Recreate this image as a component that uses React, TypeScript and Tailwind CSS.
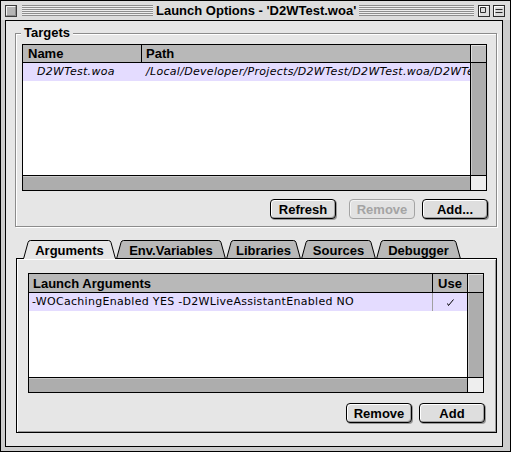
import React from 'react'

const bold = "font-['Liberation_Sans',Arial,sans-serif] font-bold text-[13px] text-black"
const geneva = "font-['DejaVu_Sans',Verdana,sans-serif] text-[11px] tracking-[0.3px] text-black"

function Stripes({ className }: { className: string }) {
  return (
    <div
      className={`h-[11px] bg-[image:repeating-linear-gradient(to_bottom,#8e8e8e_0px,#8e8e8e_1px,#eeeeee_1px,#eeeeee_2px)] ${className}`}
    />
  )
}

function CloseBox() {
  return (
    <svg width="12" height="12" className="shrink-0">
      <rect x="0.5" y="0.5" width="11" height="11" fill="#b4b4b4" stroke="#3c3c3c" />
      <path d="M1.5 10.5V1.5H10.5" stroke="#f4f4f4" fill="none" />
      <path d="M1.5 10.5H10.5V1.5" stroke="#8a8a8a" fill="none" />
    </svg>
  )
}

function ZoomBox() {
  return (
    <svg width="12" height="12" className="shrink-0 ml-[4px]">
      <rect x="0.5" y="0.5" width="11" height="11" fill="#dcdcdc" stroke="#2c2c2c" />
      <path d="M2.5 2.5H7.5V7.5H2.5Z" fill="none" stroke="#2c2c2c" />
      <path d="M1.5 10.5V1.5H10.5" stroke="#fff" fill="none" />
    </svg>
  )
}

function CollapseBox() {
  return (
    <svg width="12" height="12" className="shrink-0 ml-[3px]">
      <rect x="0.5" y="0.5" width="11" height="11" fill="#dcdcdc" stroke="#2c2c2c" />
      <path d="M2.5 4.5H9.5M2.5 7.5H9.5" stroke="#2c2c2c" fill="none" />
      <path d="M1.5 10.5V1.5H10.5" stroke="#fff" fill="none" />
    </svg>
  )
}

function Button({ label, disabled }: { label: string; disabled?: boolean }) {
  return (
    <div
      className={`w-[66px] h-[20px] rounded-[4px] border flex items-center justify-center ${bold} leading-none ${
        disabled
          ? 'border-[#a4a4a4] !text-[#a4a4a4] bg-[#e2e2e2] shadow-[inset_1px_1px_0_#f4f4f4]'
          : 'border-black bg-[#dedede] shadow-[inset_1px_1px_0_#fff,inset_-1px_-1px_0_#a0a0a0,1px_1px_0_#9a9a9a]'
      }`}
    >
      {label}
    </div>
  )
}

function VScroll({ head }: { head: string }) {
  return (
    <div className="w-[16px] border-l border-black flex flex-col shrink-0">
      <div className={`${head} border-b border-black bg-[#bdbdbd] shadow-[inset_1px_1px_0_#e0e0e0]`} />
      <div className="flex-1 bg-[#adadad] shadow-[inset_1px_0_0_#cacaca]" />
    </div>
  )
}

function HScroll() {
  return (
    <div className="h-[15px] border-t border-black flex shrink-0">
      <div className="flex-1 bg-[#adadad] shadow-[inset_0_1px_0_#cacaca]" />
      <div className="w-[16px] border-l border-black bg-[#eeeeee]" />
    </div>
  )
}

function Tab({ label, w, width, active }: { label: string; w: number; width: string; active?: boolean }) {
  const d = `M0.5 19 L5 2.5 Q5.6 0.5 7.5 0.5 L${w - 7.5} 0.5 Q${w - 5.6} 0.5 ${w - 5} 2.5 L${w - 0.5} 19`
  return (
    <div className={`relative h-[19px] shrink-0 ${width}`}>
      <svg width={w} height="19" className="absolute left-0 top-0">
        <path d={d} fill={active ? '#e6e6e6' : '#b9b9b9'} stroke="#000" />
        {active ? (
          <rect x="1" y="18" width={w - 2} height="1" fill="#e6e6e6" />
        ) : (
          <path d={`M0 18.5H${w}`} stroke="#000" />
        )}
      </svg>
      <div className={`relative text-center pt-[3px] leading-[15px] whitespace-nowrap ${bold}`}>{label}</div>
    </div>
  )
}

export default function App() {
  return (
    <div className="w-[511px] h-[452px] border border-black bg-[#cccccc] flex flex-col overflow-hidden">
      <div className="h-[19px] shrink-0 flex items-center pl-[4px] pr-[5px] bg-[#dddddd]">
        <CloseBox />
        <Stripes className="ml-[5px] w-[131px] shrink-0" />
        <div className={`${bold} px-[3px] leading-[15px] whitespace-nowrap`}>Launch Options - 'D2WTest.woa'</div>
        <Stripes className="flex-1" />
        <ZoomBox />
        <CollapseBox />
      </div>

      <div className="flex-1 ml-[4px] mr-[7px] mb-[4px] border border-black bg-[#e6e6e6] flex flex-col">
        <div className="relative mt-[12px] ml-[9px] mr-[5px] h-[194px] shrink-0 border border-[#8c8c8c] shadow-[1px_1px_0_#fff,inset_1px_1px_0_#fff] flex flex-col pl-[6px] pr-[9px] pt-[10px]">
          <span className={`absolute -top-[9px] left-[5px] px-[3px] bg-[#e6e6e6] leading-[15px] ${bold}`}>Targets</span>

          <div className="h-[147px] shrink-0 border border-black bg-white flex flex-col">
            <div className="flex-1 flex min-h-0">
              <div className="flex-1 min-w-0 flex flex-col">
                <div className={`h-[18px] shrink-0 flex border-b border-black bg-[#b8b8b8] leading-none ${bold}`}>
                  <div className="w-[119px] border-r border-black pl-[5px] flex items-center">Name</div>
                  <div className="flex-1 pl-[4px] flex items-center">Path</div>
                </div>
                <div className={`h-[18px] shrink-0 flex bg-[#e4dcff] italic ${geneva}`}>
                  <div className="w-[119px] pl-[14px] flex items-center">D2WTest.woa</div>
                  <div className="flex-1 min-w-0 pl-[4px] flex items-center whitespace-nowrap overflow-hidden">
                    /Local/Developer/Projects/D2WTest/D2WTest.woa/D2WTest
                  </div>
                </div>
              </div>
              <VScroll head="h-[18px]" />
            </div>
            <HScroll />
          </div>

          <div className="mt-[8px] flex justify-end -mr-[1px]">
            <Button label="Refresh" />
            <div className="ml-[13px]">
              <Button label="Remove" disabled />
            </div>
            <div className="ml-[7px]">
              <Button label="Add..." />
            </div>
          </div>
        </div>

        <div className="relative z-10 mt-[13px] ml-[17px] h-[19px] -mb-[1px] flex shrink-0">
          <Tab label="Arguments" w={93} width="w-[93px]" active />
          <Tab label="Env.Variables" w={110} width="w-[110px]" />
          <Tab label="Libraries" w={75} width="w-[75px]" />
          <Tab label="Sources" w={75} width="w-[75px]" />
          <Tab label="Debugger" w={85} width="w-[85px]" />
        </div>

        <div className="ml-[10px] mr-[5px] h-[175px] shrink-0 border border-black bg-[#e6e6e6] shadow-[inset_1px_1px_0_#fff,inset_-1px_-1px_0_#9a9a9a] flex flex-col pl-[11px] pr-[12px] pt-[14px]">
          <div className="h-[120px] shrink-0 border border-black bg-white flex flex-col">
            <div className="flex-1 flex min-h-0">
              <div className="flex-1 min-w-0 flex flex-col">
                <div className={`h-[19px] shrink-0 flex border-b border-black bg-[#b8b8b8] leading-none ${bold}`}>
                  <div className="flex-1 pl-[4px] flex items-center">Launch Arguments</div>
                  <div className="w-[35px] border-l border-black flex items-center justify-center">Use</div>
                </div>
                <div className={`h-[18px] shrink-0 flex bg-[#e4dcff] ${geneva}`}>
                  <div className="flex-1 min-w-0 pl-[3px] flex items-center whitespace-nowrap overflow-hidden">
                    -WOCachingEnabled YES -D2WLiveAssistantEnabled NO
                  </div>
                  <div className="w-[35px] border-l border-[#a0a0a0] flex items-center justify-center">
                    <svg width="10" height="10">
                      <path d="M2.5 6.5 L3.5 8.5 L8.5 2.5" stroke="#000" strokeWidth="1" fill="none" />
                    </svg>
                  </div>
                </div>
              </div>
              <VScroll head="h-[19px]" />
            </div>
            <HScroll />
          </div>

          <div className="mt-[10px] flex justify-end -mr-[1px]">
            <Button label="Remove" />
            <div className="ml-[7px]">
              <Button label="Add" />
            </div>
          </div>
        </div>
      </div>
    </div>
  )
}
